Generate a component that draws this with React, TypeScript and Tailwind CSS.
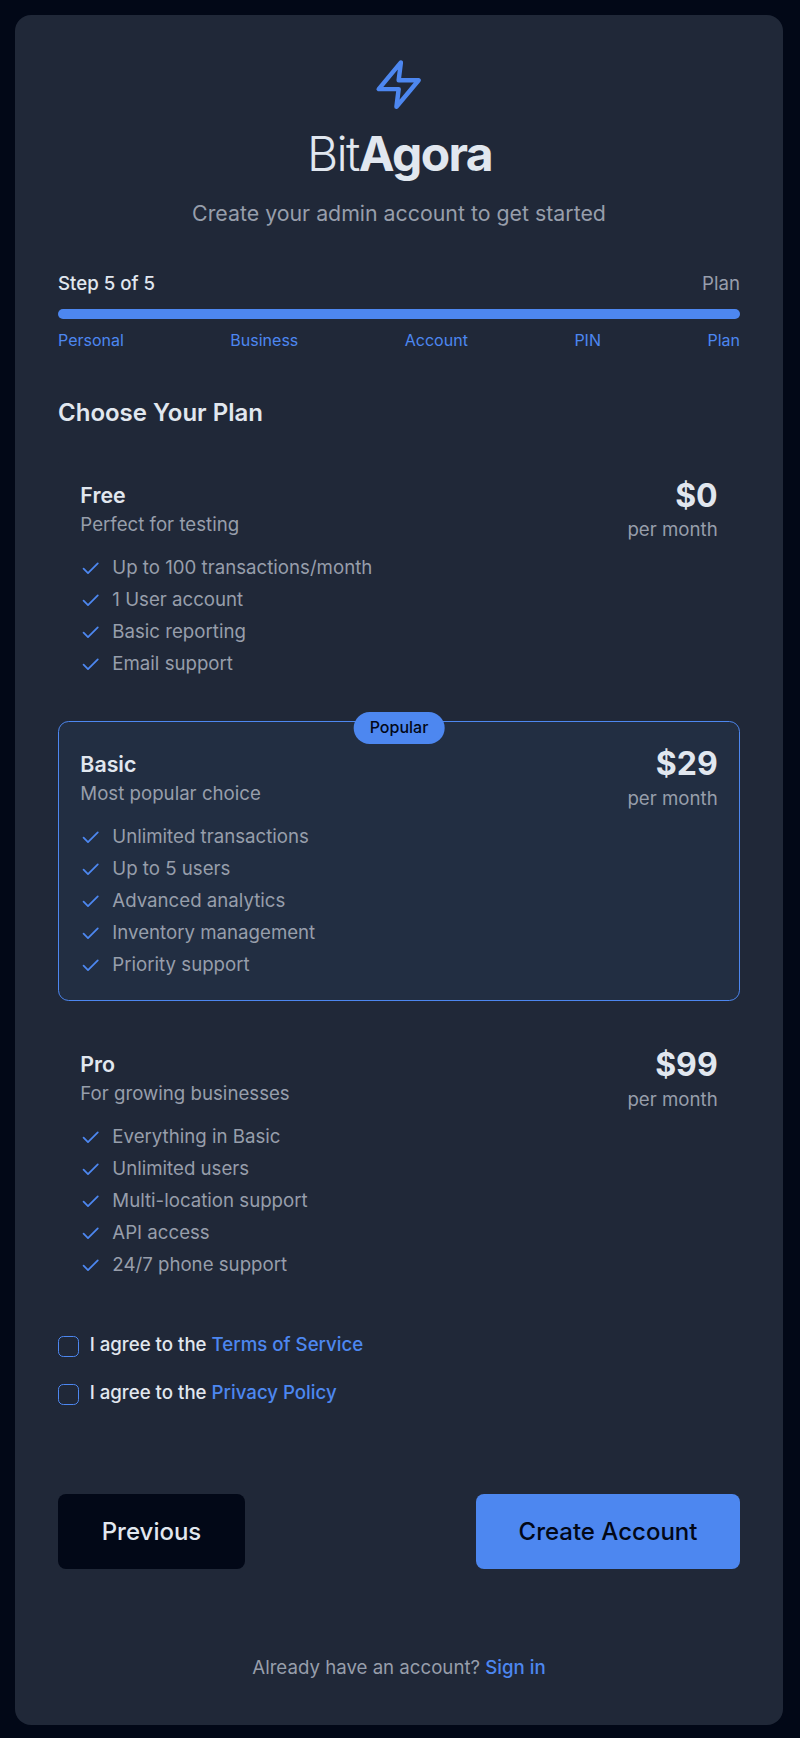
import React from "react";

type Plan = {
  name: string;
  blurb: string;
  price: string;
  features: string[];
  popular?: boolean;
};

const steps = ["Personal", "Business", "Account", "PIN", "Plan"];

const plans: Plan[] = [
  {
    name: "Free",
    blurb: "Perfect for testing",
    price: "$0",
    features: ["Up to 100 transactions/month", "1 User account", "Basic reporting", "Email support"],
  },
  {
    name: "Basic",
    blurb: "Most popular choice",
    price: "$29",
    popular: true,
    features: ["Unlimited transactions", "Up to 5 users", "Advanced analytics", "Inventory management", "Priority support"],
  },
  {
    name: "Pro",
    blurb: "For growing businesses",
    price: "$99",
    features: ["Everything in Basic", "Unlimited users", "Multi-location support", "API access", "24/7 phone support"],
  },
];

function Bolt() {
  return (
    <svg viewBox="0 0 24 24" className="h-[53.33px] w-[53.33px] text-[#4d87f0]" fill="none" stroke="currentColor" strokeWidth="2" strokeLinecap="round" strokeLinejoin="round">
      <path d="M13 2 3 14h9l-1 8 10-12h-9l1-8z" />
    </svg>
  );
}

function Check() {
  return (
    <svg viewBox="0 0 24 24" className="h-[21.33px] w-[21.33px] shrink-0 text-[#4d87f0]" fill="none" stroke="currentColor" strokeWidth="2" strokeLinecap="round" strokeLinejoin="round">
      <path d="M20 6 9 17l-5-5" />
    </svg>
  );
}

function PlanCard({ plan }: { plan: Plan }) {
  return (
    <div
      className={
        plan.popular
          ? "relative rounded-[10.67px] border border-[#4d87f0] bg-[#222e42] p-[21.33px]"
          : "relative rounded-[10.67px] border border-[#202838] p-[21.33px]"
      }
    >
      {plan.popular && (
        <div className="absolute -top-[10px] left-1/2 flex h-8 -translate-x-1/2 items-center rounded-full bg-[#4d87f0] px-4 pb-[2px] text-[16px] font-medium text-[#020817]">
          Popular
        </div>
      )}
      <div className="flex items-center justify-between">
        <div>
          <h3 className="pb-px text-[21.33px] leading-[31px] font-semibold">{plan.name}</h3>
          <p className="text-[18.67px] leading-[26.67px] text-[#979eab]">{plan.blurb}</p>
        </div>
        <div className="text-right">
          <div className="text-[32px] leading-[42.67px] font-bold">{plan.price}</div>
          <div className="text-[18.67px] leading-[26.67px] text-[#979eab]">per month</div>
        </div>
      </div>
      <ul className="mt-[11.2px] flex flex-col gap-[5.33px]">
        {plan.features.map((f) => (
          <li key={f} className="flex items-center gap-[10.67px] text-[18.67px] leading-[26.67px] text-[#979eab]">
            <Check />
            {f}
          </li>
        ))}
      </ul>
    </div>
  );
}

function Agreement({ link }: { link: string }) {
  return (
    <div className="flex items-center gap-[10.67px]">
      <span className="mt-px h-[21px] w-[21px] shrink-0 rounded-[5.33px] border border-[#4d87f0]" />
      <span className="text-[18.67px] leading-[26.67px] font-medium">
        I agree to the <a className="text-[#4d87f0]">{link}</a>
      </span>
    </div>
  );
}

export default function App() {
  return (
    <div className="h-[1738px] w-[800px] bg-[#020817] pt-[15px] pl-[15px] font-['Inter',sans-serif] text-[#e1e7ef]">
      <main className="flex h-[1710px] w-[768px] flex-col rounded-[16px] bg-[#202838] px-[43px]">
        <header className="flex flex-col items-center pt-[42.67px]">
          <Bolt />
          <h1 className="mt-4 pl-px text-[48px] leading-[53.33px] font-light tracking-[-1.6px]">
            Bit<span className="font-bold">Agora</span>
          </h1>
          <p className="mt-[17px] text-[21.33px] leading-8 text-[#979eab]">Create your admin account to get started</p>
        </header>

        <section className="mt-[42px]">
          <div className="flex justify-between text-[18.67px] leading-[26.67px]">
            <span className="font-medium">Step 5 of 5</span>
            <span className="text-[#979eab]">Plan</span>
          </div>
          <div className="mt-[11px] h-[10px] rounded-full bg-[#4d87f0]" />
          <div className="mt-[11px] flex justify-between text-[16px] leading-[21.33px] text-[#4d87f0]">
            {steps.map((s) => (
              <span key={s}>{s}</span>
            ))}
          </div>
        </section>

        <h2 className="mt-[43px] text-[24px] leading-[37px] font-semibold">Choose Your Plan</h2>
        <div className="mt-[21px] flex flex-col gap-[20.8px]">
          {plans.map((p) => (
            <PlanCard key={p.name} plan={p} />
          ))}
        </div>

        <div className="mt-[31px] flex flex-col gap-[21.33px]">
          <Agreement link="Terms of Service" />
          <Agreement link="Privacy Policy" />
        </div>

        <div className="mt-[86.4px] flex justify-between">
          <button className="h-[75px] w-[187px] rounded-[8px] bg-[#020817] pt-[2px] text-[24px] font-medium">Previous</button>
          <button className="h-[75px] w-[264px] rounded-[8px] bg-[#4d87f0] pt-[2px] text-[24px] font-medium text-[#020817]">Create Account</button>
        </div>

        <p className="mt-[86px] text-center text-[18.67px] leading-[26.67px] text-[#979eab]">
          Already have an account? <a className="font-medium text-[#4d87f0]">Sign in</a>
        </p>
      </main>
    </div>
  );
}
